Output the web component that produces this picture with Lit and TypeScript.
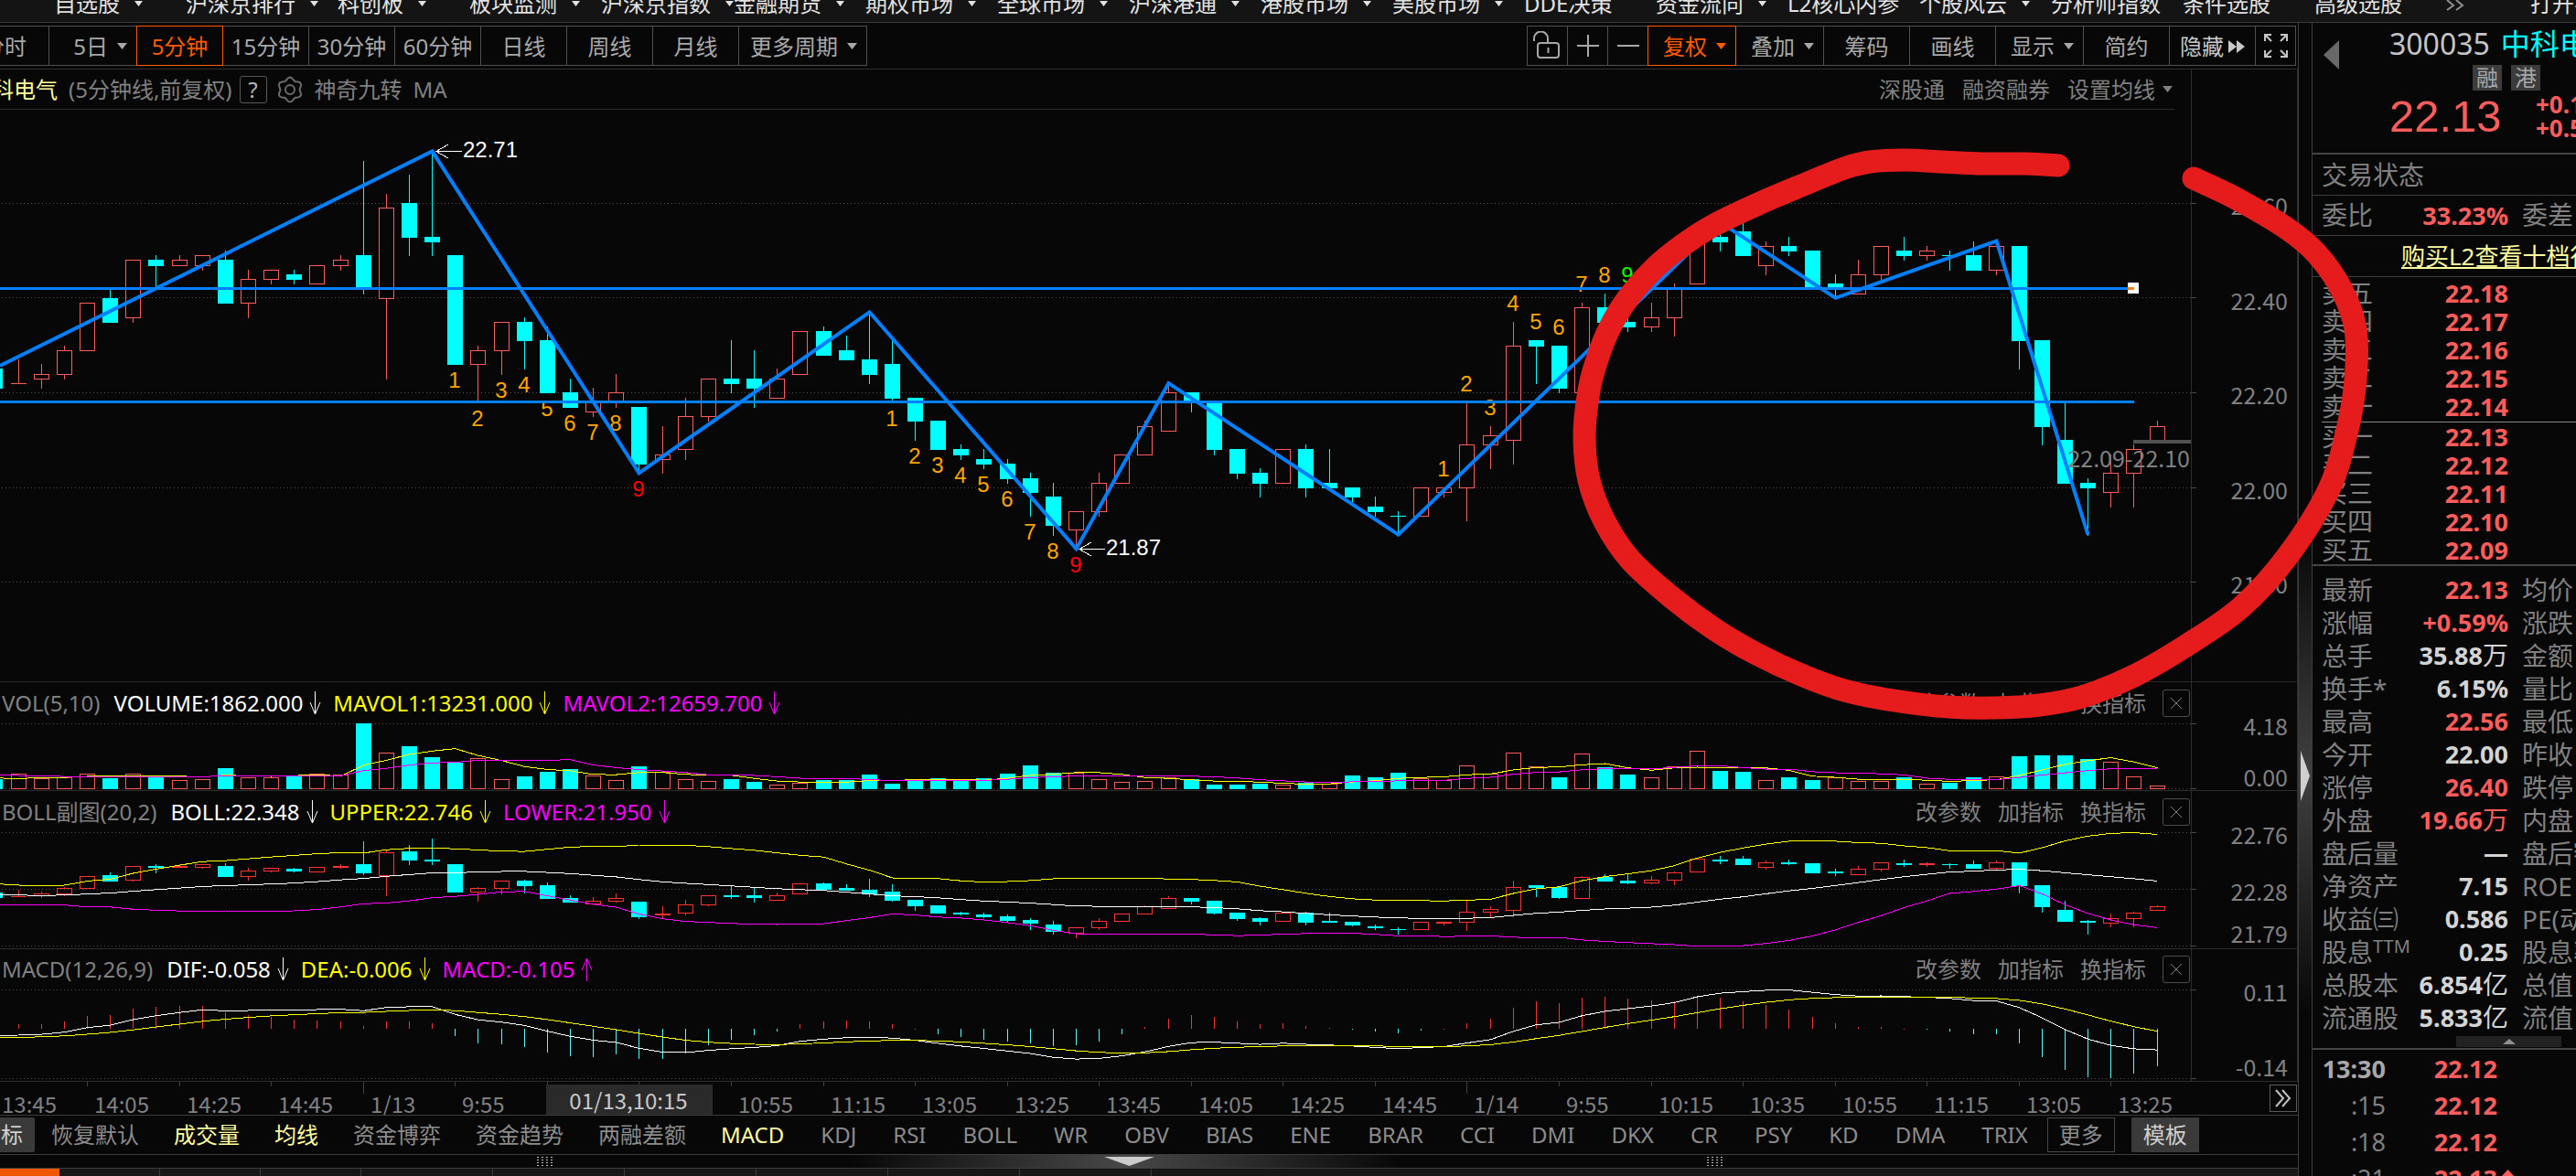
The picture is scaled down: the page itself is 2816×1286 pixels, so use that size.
import { LitElement, html, svg, css } from "lit";
import { customElement } from "lit/decorators.js";
import { classMap } from "lit/directives/class-map.js";

/* ---------- market data (prices in cents: open, close, high, low) ---------- */
type Candle = [number, number, number, number];

const CANDLES: Candle[] = [
  [2225, 2221, 2225, 2221],
  [2222, 2222, 2227, 2222], [2223, 2224, 2226, 2221], [2224, 2229, 2230, 2223], [2229, 2239, 2239, 2229],
  [2240, 2235, 2242, 2235], [2236, 2248, 2248, 2235], [2248, 2247, 2249, 2242], [2247, 2248, 2249, 2247],
  [2247, 2249, 2249, 2246], [2248, 2239, 2250, 2239], [2239, 2244, 2246, 2236], [2244, 2246, 2246, 2243],
  [2245, 2244, 2246, 2243], [2243, 2247, 2247, 2243], [2247, 2248, 2249, 2246], [2249, 2242, 2269, 2241],
  [2240, 2259, 2262, 2223], [2260, 2253, 2266, 2249], [2253, 2252, 2271, 2249], [2249, 2226, 2249, 2226],
  [2226, 2229, 2230, 2218], [2229, 2235, 2235, 2224], [2235, 2231, 2236, 2225], [2231, 2220, 2234, 2220],
  [2220, 2217, 2223, 2217], [2216, 2218, 2221, 2215], [2218, 2220, 2224, 2217], [2217, 2205, 2217, 2203],
  [2206, 2207, 2213, 2203], [2208, 2215, 2219, 2206], [2215, 2223, 2223, 2214], [2223, 2222, 2231, 2220],
  [2223, 2221, 2229, 2217], [2219, 2223, 2225, 2219], [2224, 2233, 2233, 2224], [2233, 2228, 2234, 2228],
  [2229, 2227, 2232, 2227], [2227, 2224, 2237, 2222], [2226, 2219, 2232, 2218], [2219, 2214, 2219, 2210],
  [2214, 2208, 2214, 2208], [2208, 2207, 2209, 2206], [2206, 2205, 2208, 2204], [2205, 2202, 2206, 2201],
  [2202, 2199, 2203, 2194], [2198, 2192, 2201, 2190], [2191, 2195, 2195, 2187], [2195, 2201, 2203, 2194],
  [2201, 2207, 2207, 2201], [2207, 2213, 2214, 2207], [2212, 2220, 2222, 2212], [2220, 2218, 2220, 2216],
  [2218, 2208, 2218, 2207], [2208, 2203, 2208, 2202], [2203, 2201, 2204, 2198], [2201, 2208, 2208, 2201],
  [2208, 2200, 2209, 2198], [2201, 2200, 2208, 2200], [2200, 2198, 2200, 2197], [2196, 2195, 2198, 2194],
  [2194, 2194, 2195, 2190], [2194, 2200, 2200, 2194], [2199, 2200, 2200, 2198], [2200, 2209, 2218, 2193],
  [2209, 2211, 2213, 2204], [2210, 2230, 2235, 2205], [2231, 2230, 2231, 2222], [2230, 2221, 2230, 2220],
  [2220, 2238, 2239, 2220], [2238, 2235, 2241, 2235], [2235, 2234, 2241, 2233], [2234, 2236, 2239, 2233],
  [2236, 2242, 2243, 2232], [2243, 2254, 2254, 2243], [2253, 2252, 2256, 2250], [2254, 2249, 2256, 2249],
  [2247, 2251, 2252, 2245], [2251, 2250, 2253, 2249], [2250, 2242, 2250, 2242], [2243, 2242, 2245, 2240],
  [2241, 2245, 2248, 2241], [2245, 2251, 2251, 2244], [2250, 2249, 2253, 2248], [2249, 2250, 2251, 2248],
  [2249, 2249, 2250, 2246], [2249, 2246, 2252, 2246], [2246, 2251, 2252, 2245], [2251, 2231, 2251, 2225],
  [2231, 2213, 2231, 2209], [2210, 2201, 2218, 2201], [2201, 2200, 2202, 2190], [2199, 2203, 2207, 2196],
  [2203, 2208, 2209, 2196], [2210, 2213, 2214, 2210],
];

const VOLUMES = [
  32, 47, 34, 36, 47, 34, 49, 42, 29, 32, 65, 35, 35, 40, 47, 44, 206, 113, 134, 99, 83, 98, 32, 39, 53, 62, 41,
  29, 71, 55, 32, 26, 30, 22, 12, 18, 27, 27, 45, 16, 28, 33, 26, 33, 48, 73, 50, 52, 32, 21, 24, 35, 30, 13, 13,
  16, 14, 19, 17, 42, 36, 50, 34, 27, 75, 49, 113, 72, 35, 110, 68, 45, 35, 72, 121, 56, 53, 27, 36, 27, 37, 24,
  24, 36, 15, 19, 36, 38, 102, 105, 105, 94, 84, 38, 9,
];

/* Bars before the visible window, used to warm up the averages. */
const PRIOR_CLOSES = [
  2231, 2229, 2224, 2220, 2219, 2217, 2219, 2221, 2223, 2225, 2229, 2232, 2229, 2222, 2217, 2218, 2223, 2224, 2222,
];
const PRIOR_VOLUMES = [51, 51, 51, 51, 51, 51, 28, 28, 30];

const RISE = "#ff5c5c";
const FALL = "#00ffff";
const WIDTH = 2395;

/* Index 0 in the arrays is the bar cut by the left edge. */
const barX = (i: number) => Math.round(19.6 + 25.14 * (i - 1));
const isDoji = (i: number) => CANDLES[i][0] === CANDLES[i][1];
const rising = (i: number) => (isDoji(i) ? i === 1 : CANDLES[i][1] > CANDLES[i][0]);
/* A volume bar is also hollow when the close is unchanged from the bar before. */
const volumeUp = (i: number) => rising(i) || (i > 0 && CANDLES[i][1] === CANDLES[i - 1][1]);

const priceY = (p: number) => 222.3 + (2260 - p) * 5.176;
const bollY = (p: number) => 972.2 + (2228 - p) * 1.281;
const volY = (v: number) => 862.6 - v * 0.3467;
const macdY = (v: number) => 1125.3 - v * 3.886;

const sum = (values: number[]) => values.reduce((a, b) => a + b, 0);
const mean = (values: number[]) => sum(values) / values.length;

function windowed(prior: number[], values: number[], n: number) {
  const all = [...prior, ...values];
  return values.map((_, i) => all.slice(Math.max(0, prior.length + i - n + 1), prior.length + i + 1));
}

const CLOSES = CANDLES.map((c) => c[1]);
const BOLL = windowed(PRIOR_CLOSES, CLOSES, 20).map((w) => {
  const m = mean(w);
  const d = Math.sqrt(sum(w.map((v) => (v - m) ** 2)) / (w.length - 1));
  return { mid: m, up: m + 2 * d, low: m - 2 * d };
});
const MAVOL1 = windowed(PRIOR_VOLUMES, VOLUMES, 5).map(mean);
const MAVOL2 = windowed(PRIOR_VOLUMES, VOLUMES, 10).map(mean);

const MACD = (() => {
  let e12 = 2222.7;
  let e26 = 2224.5;
  let dea = -2.7;
  return CLOSES.map((c, i) => {
    if (i > 0) {
      e12 += ((c - e12) * 2) / 13;
      e26 += ((c - e26) * 2) / 27;
    }
    const dif = e12 - e26;
    dea += (dif - dea) * 0.2;
    return { dif, dea, bar: 2 * (dif - dea) };
  });
})();

const pts = (values: number[], y: (v: number) => number) =>
  values.map((v, i) => `${barX(i) + 0.5},${y(v).toFixed(1)}`).join(" ");

function candles(y: (p: number) => number, rise: string) {
  return CANDLES.map(([o, c, h, l], i) => {
    const x = barX(i);
    const up = rising(i);
    const color = up ? rise : FALL;
    const top = Math.round(y(Math.max(o, c)));
    const bottom = Math.max(top, Math.round(y(Math.min(o, c))));
    const hi = Math.round(y(h));
    const lo = Math.round(y(l));
    return svg`
      ${hi < top ? svg`<rect x=${x} y=${hi} width="1" height=${top - hi} fill=${color}></rect>` : ""}
      ${lo > bottom ? svg`<rect x=${x} y=${bottom} width="1" height=${lo - bottom + 1} fill=${color}></rect>` : ""}
      ${
        isDoji(i)
          ? svg`<rect x=${x - 8} y=${top} width="17" height="1" fill=${color}></rect>`
          : up
            ? svg`<rect x=${x - 7.5} y=${top + 0.5} width="16" height=${Math.max(1, bottom - top)} fill="none" stroke=${color}></rect>`
            : svg`<rect x=${x - 8} y=${top} width="17" height=${bottom - top + 1} fill=${color}></rect>`
      }`;
  });
}

const dotted = (y: number) =>
  svg`<line x1="2" x2=${WIDTH} y1=${y + 0.5} y2=${y + 0.5} stroke="#505050" stroke-dasharray="1 3"></line>`;

/* Nine-count markers: first array slot, side, colour of the ninth. */
const COUNTS = [
  { from: 20, below: true, last: "#ff0000" },
  { from: 39, below: true, last: "#ff0000" },
  { from: 63, below: false, last: "#00ff00" },
];

const ZIGZAG: [number, number][] = [
  [19, 2271], [28, 2203], [38, 2237], [47, 2187], [51, 2222], [61, 2190], [75, 2256], [80, 2240], [87, 2252], [91, 2190],
];

const MARKER: [number, number][] = [
  [2398, 195], [2446, 218], [2500, 250], [2533, 278], [2560, 317], [2575, 360], [2575, 415], [2566, 470], [2546, 535],
  [2500, 609], [2450, 664], [2393, 704], [2333, 739], [2276, 762], [2230, 771], [2181, 774], [2130, 773], [2070, 766],
  [2016, 755], [1969, 738], [1920, 715], [1874, 688], [1827, 653], [1782, 612], [1754, 570], [1737, 525], [1732, 477],
  [1737, 427], [1746, 393], [1759, 360], [1779, 327], [1809, 293], [1841, 267], [1874, 246], [1922, 223], [1969, 203],
  [2016, 184], [2044, 177], [2082, 175], [2124, 177], [2167, 179], [2215, 179], [2250, 181],
];

function smooth(p: [number, number][]) {
  let d = `M${p[0][0]} ${p[0][1]}`;
  for (let i = 0; i < p.length - 1; i++) {
    const a = p[Math.max(0, i - 1)];
    const b = p[i];
    const c = p[i + 1];
    const e = p[Math.min(p.length - 1, i + 2)];
    d += ` C${b[0] + (c[0] - a[0]) / 6} ${b[1] + (c[1] - a[1]) / 6} ${c[0] - (e[0] - b[0]) / 6} ${c[1] - (e[1] - b[1]) / 6} ${c[0]} ${c[1]}`;
  }
  return d;
}

const GEAR = (() => {
  const out: string[] = [];
  for (let k = 0; k < 72; k++) {
    const t = (k / 72) * Math.PI * 2;
    const r = 12 + 1.4 * Math.cos(6 * t);
    out.push(`${(15 + r * Math.sin(t)).toFixed(2)},${(15 - r * Math.cos(t)).toFixed(2)}`);
  }
  return out.join(" ");
})();

const MENU: [string, boolean][] = [
  ["自选股", true], ["沪深京排行", true], ["科创板", true], ["板块监测", true], ["沪深京指数", true], ["金融期货", true],
  ["期权市场", true], ["全球市场", true], ["沪深港通", true], ["港股市场", true], ["美股市场", true], ["DDE决策", false],
  ["资金流向", true], ["L2核心内参", false], ["个股风云", true], ["分析师指数", false], ["条件选股", false], ["高级选股", false],
];

const TIMES = [
  "13:45", "14:05", "14:25", "14:45", "1/13", "9:55", "", "", "10:55", "11:15", "13:05", "13:25",
  "13:45", "14:05", "14:25", "14:45", "1/14", "9:55", "10:15", "10:35", "10:55", "11:15", "13:05", "13:25",
];

const PRESETS = ["恢复默认", "成交量", "均线", "资金博弈", "资金趋势", "两融差额"];
const INDICATORS = [
  "MACD", "KDJ", "RSI", "BOLL", "WR", "OBV", "BIAS", "ENE", "BRAR", "CCI", "DMI", "DKX", "CR", "PSY", "KD", "DMA", "TRIX",
];
const CHOSEN = new Set(["成交量", "均线", "MACD"]);

const SELLS = [["卖五", "22.18"], ["卖四", "22.17"], ["卖三", "22.16"], ["卖二", "22.15"], ["卖一", "22.14"]];
const BUYS = [["买一", "22.13"], ["买二", "22.12"], ["买三", "22.11"], ["买四", "22.10"], ["买五", "22.09"]];

interface Stat { label: string; sup?: string; value: string; unit?: string; up?: boolean; next: string }
const STATS: Stat[] = [
  { label: "最新", value: "22.13", up: true, next: "均价" },
  { label: "涨幅", value: "+0.59%", up: true, next: "涨跌" },
  { label: "总手", value: "35.88", unit: "万", next: "金额" },
  { label: "换手*", value: "6.15%", next: "量比" },
  { label: "最高", value: "22.56", up: true, next: "最低" },
  { label: "今开", value: "22.00", next: "昨收" },
  { label: "涨停", value: "26.40", up: true, next: "跌停" },
  { label: "外盘", value: "19.66", unit: "万", up: true, next: "内盘" },
  { label: "盘后量", value: "—", next: "盘后额" },
  { label: "净资产", value: "7.15", next: "ROE" },
  { label: "收益㈢", value: "0.586", next: "PE(动)" },
  { label: "股息", sup: "TTM", value: "0.25", next: "股息率" },
  { label: "总股本", value: "6.854", unit: "亿", next: "总值" },
  { label: "流通股", value: "5.833", unit: "亿", next: "流值" },
];

const TRADES = [["13:30", "22.12", ""], [":15", "22.12", ""], [":18", "22.12", ""], [":21", "22.13", "up"]];

type Reading = [string, string, boolean];

@customElement("app-root")
export class AppRoot extends LitElement {
  static styles = css`
    :host {
      display: block;
      --line: #2c2c2c;
      --edge: #3c3c3c;
      --dim: #808080;
      --rise: #ff5c5c;
      --accent: #ff5a00;
      --pale: #ffffa0;
      font-family: "Noto Sans", "Noto Sans CJK SC", sans-serif;
      font-size: 24px;
      line-height: 28px;
      color: var(--dim);
    }
    * { box-sizing: border-box; }
    button {
      font: inherit; color: inherit; background: none; border: 0; padding: 0; margin: 0;
      white-space: nowrap; cursor: pointer;
    }
    svg { display: block; }
    table { border-collapse: collapse; }
    td, th { padding: 0; font-weight: 400; text-align: left; white-space: nowrap; }
    .app {
      position: relative; overflow: hidden; background: #070707; min-height: 100vh;
      display: grid; grid-template-rows: 25px auto;
    }
    .menu {
      display: flex; align-items: flex-end; height: 25px; overflow: hidden; padding-left: 59px;
      background: #141414; border-bottom: 1px solid var(--edge); color: #e2e2e2;
    }
    .menu button {
      flex: 0 0 144px; display: flex; align-items: center; gap: 16px; padding-bottom: 6px;
    }
    .menu .wide { flex-basis: 166px; }
    .menu .narrow { flex-basis: 92px; padding-bottom: 12px; }
    .body { display: grid; grid-template-columns: minmax(0, 1fr) 16px 288px; height: 1261px; }
    .left { display: flex; flex-direction: column; min-width: 0; }
    .toolbar {
      display: flex; justify-content: space-between; height: 51px; padding: 3px 2px 0 0;
      border-bottom: 1px solid var(--line); color: #a8a8a8;
    }
    .group { display: flex; }
    .group button {
      width: 95px; height: 44px; margin-left: -1px; border: 1px solid #505050; overflow: hidden; padding-top: 1px;
      display: flex; align-items: center; justify-content: center; gap: 10px;
    }
    .group .cut { width: 54px; margin-left: 0; border-left: 0; justify-content: flex-end; padding-right: 24px; }
    .group .drop { width: 97px; justify-content: flex-end; padding-right: 10px; }
    .group .more { width: 141px; justify-content: flex-end; padding-right: 10px; }
    .group .icon { width: 45px; padding-top: 0; }
    .group .hide { gap: 5px; color: #c8c8c8; }
    .group .on { border-color: var(--accent); color: var(--accent); position: relative; z-index: 1; }
    .pane { display: grid; grid-template-columns: minmax(0, 1fr) 117px; border-top: 1px solid var(--line); }
    .pane.main { border-top: 0; }
    .plot { min-width: 0; }
    .plot svg { width: 100%; }
    .axis { border-left: 1px solid var(--line); border-right: 1px solid var(--line); }
    .axis svg { width: 116px; }
    .heading {
      display: flex; align-items: center; height: 44px; margin-right: 18px; padding-right: 2px;
      border-bottom: 1px solid var(--line);
    }
    .heading svg, .head svg { width: auto; }
    .stock {
      width: 63px; display: flex; justify-content: flex-end; overflow: hidden; white-space: nowrap;
      color: var(--pale); margin-right: 12px;
    }
    .help {
      width: 30px; height: 30px; border: 1px solid #585858; border-radius: 3px; margin: 0 10px 0 8px; color: #b4b4b4;
      line-height: 26px;
    }
    .gear { margin-right: 12px; }
    .ma { margin-left: 12px; }
    .links { margin-left: auto; display: flex; align-items: center; gap: 19px; }
    .links button { display: flex; align-items: center; gap: 8px; }
    .head { display: flex; align-items: center; height: 45px; padding-left: 2px; white-space: nowrap; }
    .head.low { height: 44px; }
    .name { margin-right: 15px; }
    .reading { display: flex; align-items: center; gap: 7px; margin-right: 13px; }
    .white { color: #ffffff; }
    .yellow { color: #ffff00; }
    .pink { color: #ff00ff; }
    .tools { margin-left: auto; display: flex; align-items: center; gap: 18px; padding-right: 1px; }
    .close {
      width: 30px; height: 30px; border: 1px solid #4c4c4c; border-radius: 3px;
      display: flex; align-items: center; justify-content: center;
    }
    .times { display: flex; height: 37px; border-top: 1px solid var(--line); }
    .times .plot { flex: 1; }
    .times .side { width: 117px; display: flex; justify-content: flex-end; align-items: center; padding-right: 1px; }
    .forward {
      width: 30px; height: 30px; border: 1px solid #5a5a5a; display: flex; align-items: center; justify-content: center;
    }
    .tabs {
      display: flex; align-items: center; height: 43px; border-top: 1px solid var(--edge);
      overflow: hidden; color: #8c8c8c;
    }
    .tabs .cut {
      width: 38px; height: 38px; margin-right: 18px; display: flex; justify-content: flex-end; align-items: center;
      padding-right: 13px; overflow: hidden; background: #3a3a3a; color: #d0d0d0; border-radius: 0 2px 2px 0;
    }
    .presets { display: flex; gap: 38px; padding-right: 38px; }
    .codes { display: flex; gap: 40px; padding-right: 21px; }
    .tabs .chosen { color: var(--pale); }
    .boxes { display: flex; gap: 18px; }
    .boxes button { width: 74px; height: 38px; border: 1px solid #484848; }
    .boxes .solid { background: #3a3a3a; border-color: #3a3a3a; color: #d0d0d0; }
    .drawer {
      height: 15px; border-top: 1px solid var(--edge); display: grid; align-items: center; justify-items: center;
      grid-template-columns: 1190px 89px 1190px;
      background: linear-gradient(90deg, transparent 37%, #484848 49%, transparent 61%);
    }
    .strip { display: flex; height: 9px; overflow: hidden; border-top: 1px solid var(--edge); background: #171717; }
    .strip span { width: 144px; border-right: 1px solid #3a3a3a; }
    .strip .hot { width: 65px; background: #f05500; border: 0; }
    .strip .short { width: 110px; }
    .splitter {
      border-left: 1px solid var(--edge); border-right: 1px solid var(--edge);
      display: grid; grid-template-rows: 66fr auto 34fr; justify-items: center;
      background: linear-gradient(transparent 44%, #404040 65%, transparent 86%);
    }
    .splitter button { grid-row: 2; }
    .quote { min-width: 0; overflow: hidden; font-size: 28px; line-height: 31px; white-space: nowrap; }
    .top { display: flex; height: 144px; border-bottom: 2px solid #444444; }
    .back { flex: 0 0 84px; height: 70px; padding-left: 12px; display: flex; align-items: center; }
    .title {
      display: flex; gap: 12px; height: 46px; margin: 0; padding-top: 2px;
      font-size: 32px; line-height: 42px; font-weight: 400; color: #c4c4c4;
    }
    .title b { font-weight: 400; color: #00ffff; }
    .badges { display: flex; gap: 10px; padding-left: 91px; }
    .badges span {
      width: 32px; height: 28px; background: #3c3c3c; color: #a8a8a8; font-size: 24px; line-height: 28px; text-align: center;
    }
    .deal { display: flex; align-items: center; height: 56px; color: var(--rise); }
    .price { flex: 0 0 160px; font-family: "Liberation Sans", Arial, sans-serif; font-size: 49px; line-height: 56px; }
    .moves { font-size: 26px; line-height: 26px; font-weight: 700; }
    .status { height: 45px; padding: 7px 10px; border-bottom: 1px solid var(--edge); }
    .ratio { height: 44px; padding-left: 10px; border-bottom: 1px solid var(--edge); display: flex; align-items: center; }
    .offer { height: 45px; padding: 7px 0 0 97px; border-bottom: 1px solid var(--edge); font-size: 26px; }
    .offer a { color: var(--pale); text-decoration: underline; text-underline-offset: 2px; }
    .book { margin-left: 10px; padding: 2px 0 1px; border-bottom: 1px solid #888888; }
    .book.buy { margin-left: 0; padding: 0 0 0 10px; border-bottom: 2px solid #444444; }
    .book th, .book td { height: 31px; }
    .label { width: 101px; min-width: 101px; }
    .value { width: 103px; min-width: 103px; text-align: right; font-size: 27px; font-weight: 700; color: #d4d4d4; }
    .value.up, .traded.up { color: var(--rise); }
    .unit { font-size: 28px; line-height: 0; font-weight: 400; }
    .next { padding-left: 15px; }
    .stats { height: 512px; padding: 8px 0 0 10px; }
    .stats th, .stats td { height: 36px; line-height: 34px; }
    .stats sup { font-size: 20px; line-height: 0; vertical-align: 10px; }
    .fold {
      display: flex; align-items: center; justify-content: center; width: 115px; height: 12px;
      margin: 2px 0 1px 157px; background: #222222;
    }
    .trades { border-top: 2px solid #444444; padding: 1px 0 0 10px; }
    .trades td, .trades th { height: 40px; line-height: 38px; font-size: 27px; }
    .clock { width: 70px; min-width: 70px; text-align: right; }
    .clock.full { font-weight: 700; color: #a8a8a8; }
    .traded { width: 122px; min-width: 122px; text-align: right; font-weight: 700; }
    .arrow { padding-left: 5px; }
    .marker { position: absolute; top: 0; right: 0; width: 2816px; height: 1286px; pointer-events: none; }
    .digits { font-family: "Liberation Sans", Arial, sans-serif; font-size: 24px; }
    .scale { font-family: "Noto Sans CJK SC", "Noto Sans", sans-serif; font-size: 25px; fill: #808080; }
    .hours { font-family: "Noto Sans CJK SC", "Noto Sans", sans-serif; font-size: 24px; fill: #808080; }
    .hours.picked { fill: #c8c8c8; }
  `;

  private tri(w = 11, h = 7) {
    return html`<svg width=${w} height=${h} viewBox="0 0 10 7" preserveAspectRatio="none"><path d="M0 0H10L5 7Z" fill="currentColor"></path></svg>`;
  }

  private chart(y: number, h: number, content: unknown, label: string) {
    return html`<svg height=${h} viewBox="0 ${y} ${WIDTH} ${h}" preserveAspectRatio="xMaxYMin slice"
      shape-rendering="crispEdges" role="img" aria-label=${label}>${content}</svg>`;
  }

  private scale(y: number, h: number, labels: [string, number][], ticks: number[]) {
    return html`<div class="axis"><svg height=${h} viewBox="0 ${y} 116 ${h}">
      ${ticks.map((t) => svg`<rect x="0" y=${t} width="5" height="1" fill="#484848"></rect>`)}
      ${labels.map(([s, c]) => svg`<text class="scale" x="105" y=${c + 9} text-anchor="end">${s}</text>`)}
    </svg></div>`;
  }

  private mainChart() {
    const zig = [`0,400`, ...ZIGZAG.map(([i, p]) => `${barX(i) + 0.5},${priceY(p).toFixed(1)}`)].join(" ");
    return this.chart(120, 625, svg`
      ${[222, 325, 429, 533, 636].map(dotted)}
      ${candles(priceY, RISE)}
      ${COUNTS.map((g) => Array.from({ length: 9 }, (_, k) => {
        const c = CANDLES[g.from + k];
        const mid = g.below ? priceY(c[3]) + 18 : priceY(c[2]) - 20;
        return svg`<text class="digits" text-anchor="middle" x=${barX(g.from + k)} y=${Math.round(mid + 8)}
          fill=${k === 8 ? g.last : "#ffa500"}>${k + 1}</text>`;
      }))}
      <rect x="0" y="314" width="2333" height="3" fill="#0080ff"></rect>
      <rect x="0" y="438" width="2333" height="3" fill="#0080ff"></rect>
      <polyline points=${zig} fill="none" stroke="#0080ff" stroke-width="4" shape-rendering="auto"></polyline>
      <rect x="2326" y="309" width="12" height="12" fill="#ffffff"></rect>
      <rect x="2326" y="314" width="7" height="3" fill="#ff8000"></rect>
      <rect x="2332" y="481" width="63" height="4" fill="#505050"></rect>
      <text class="scale" x="2394" y="511" text-anchor="end">22.09-22.10</text>
      ${[[477, 165, "22.71"], [1180, 600, "21.87"]].map(([x, y, s]) => svg`
        <path d=${`M${x} ${Number(y) + 0.5}H${Number(x) + 28}M${Number(x) + 13} ${Number(y) - 7}L${x} ${Number(y) + 0.5}L${Number(x) + 13} ${Number(y) + 8}`}
          fill="none" stroke="#ffffff"></path>
        <text class="digits" x=${Number(x) + 29} y=${Number(y) + 7} fill="#ffffff">${s}</text>`)}
    `, "5分钟K线");
  }

  private volumeChart() {
    return this.chart(791, 73, svg`
      ${dotted(791)}${dotted(862)}
      ${VOLUMES.map((v, i) => {
        const top = Math.round(volY(v));
        return volumeUp(i)
          ? svg`<rect x=${barX(i) - 7.5} y=${top + 0.5} width="16" height=${Math.max(1, 862 - top)} fill="#070707" stroke=${RISE}></rect>`
          : svg`<rect x=${barX(i) - 8} y=${top} width="17" height=${863 - top} fill=${FALL}></rect>`;
      })}
      <polyline points=${pts(MAVOL1, volY)} fill="none" stroke="#ffff00"></polyline>
      <polyline points=${pts(MAVOL2, volY)} fill="none" stroke="#ff00ff"></polyline>
    `, "成交量");
  }

  private bollChart() {
    return this.chart(910, 127, svg`
      ${dotted(910)}${dotted(972)}${dotted(1034)}
      ${candles(bollY, "#ff3232")}
      <polyline points=${pts(BOLL.map((b) => b.up), bollY)} fill="none" stroke="#ffff00"></polyline>
      <polyline points=${pts(BOLL.map((b) => b.mid), bollY)} fill="none" stroke="#ffffff"></polyline>
      <polyline points=${pts(BOLL.map((b) => b.low), bollY)} fill="none" stroke="#ff00ff"></polyline>
    `, "BOLL");
  }

  private macdChart() {
    return this.chart(1082, 100, svg`
      ${dotted(1082)}${dotted(1179)}
      ${MACD.map(({ bar }, i) => {
        const y = Math.round(macdY(bar));
        return svg`<rect x=${barX(i)} y=${Math.min(y, 1125)} width="1" height=${Math.max(1, Math.abs(y - 1125))}
          fill=${bar > 0 ? "#ff3232" : "#54ffff"}></rect>`;
      })}
      <polyline points=${pts(MACD.map((m) => m.dif), macdY)} fill="none" stroke="#ffffff"></polyline>
      <polyline points=${pts(MACD.map((m) => m.dea), macdY)} fill="none" stroke="#ffff00"></polyline>
    `, "MACD");
  }

  private timeAxis() {
    return this.chart(1183, 36, svg`
      ${TIMES.map((t, k) => {
        const x = barX(4 * k);
        const tall = t.startsWith("1/");
        return svg`<rect x=${x} y="1183" width="1" height=${tall ? 13 : 5} fill="#404040"></rect>
          <text class="hours" x=${x + 8} y="1217">${t}</text>`;
      })}
      <rect x="597" y="1186" width="182" height="33" fill="#2a2a2a"></rect>
      <text class="hours picked" x="687" y="1213" text-anchor="middle">01/13,10:15</text>
    `, "时间轴");
  }

  private readings(name: string, list: Reading[], low = false) {
    return html`<div class=${classMap({ head: true, low })}>
      <span class="name">${name}</span>
      ${list.map(([cls, text, up]) => html`<span class="reading ${cls}">${text}
        <svg width="13" height="26" viewBox="0 0 13 26"><path fill="none" stroke="currentColor"
          d=${up ? "M6.5 26V1M1 14L6.5 1L12 14" : "M6.5 0V25M1 12L6.5 25L12 12"}></path></svg></span>`)}
      <div class="tools">
        <button>改参数</button><button>加指标</button><button>换指标</button>
        <button class="close" aria-label="关闭"><svg width="14" height="14" viewBox="0 0 14 14"><path d="M1 1L13 13M13 1L1 13" stroke="#808080"></path></svg></button>
      </div>
    </div>`;
  }

  private toolbar() {
    const periods = ["5分钟", "15分钟", "30分钟", "60分钟", "日线", "周线", "月线"];
    return html`<div class="toolbar">
      <div class="group">
        <button class="cut">分时</button>
        <button class="drop">5日${this.tri()}</button>
        ${periods.map((p, i) => html`<button class=${classMap({ on: i === 0 })}>${p}</button>`)}
        <button class="more">更多周期${this.tri()}</button>
      </div>
      <div class="group">
        <button class="icon" aria-label="锁定"><svg width="32" height="32" viewBox="0 0 32 32" fill="none" stroke="currentColor" stroke-width="2">
          <rect x="5" y="13" width="23" height="16" rx="3"></rect><path d="M1 11V8A7.500 7.500 0 0 1 16 8V13M16.500 18V24"></path></svg></button>
        <button class="icon" aria-label="放大"><svg width="24" height="24"><path d="M0 12H24M12 0V24" stroke="currentColor" stroke-width="2"></path></svg></button>
        <button class="icon" aria-label="缩小"><svg width="24" height="24"><path d="M0 12H24" stroke="currentColor" stroke-width="2"></path></svg></button>
        <button class="drop on">复权${this.tri()}</button>
        <button class="drop">叠加${this.tri()}</button>
        <button>筹码</button>
        <button>画线</button>
        <button class="drop">显示${this.tri()}</button>
        <button>简约</button>
        <button class="hide">隐藏<svg width="18" height="14" viewBox="0 0 18 14"><path d="M0 0L9 7L0 14ZM9 0L18 7L9 14Z" fill="currentColor"></path></svg></button>
        <button class="icon" aria-label="全屏"><svg width="28" height="28" viewBox="0 0 28 28" fill="none" stroke="#c4c4c4" stroke-width="2">
          <path d="M2 9V2H9M2 2L9 9M19 2H26V9M26 2L19 9M2 19V26H9M2 26L9 19M19 26H26V19M26 26L19 19"></path></svg></button>
      </div>
    </div>`;
  }

  private book(rows: string[][], cls: string) {
    return html`<div class="book ${cls}"><table>
      ${rows.map(([l, v]) => html`<tr><th class="label" scope="row">${l}</th><td class="value up">${v}</td></tr>`)}
    </table></div>`;
  }

  private tab(t: string) {
    return html`<button class=${classMap({ chosen: CHOSEN.has(t) })}>${t}</button>`;
  }

  private grip() {
    return html`<svg width="17" height="10" viewBox="0 0 17 10" shape-rendering="crispEdges">${[0, 5, 10, 15].map((x) =>
      [0, 3, 6, 9].map((y) => svg`<rect x=${x} y=${y} width="2" height="1" fill="#c0c0c0"></rect>`))}</svg>`;
  }

  private quote() {
    return html`<section class="quote">
      <div class="top">
        <button class="back" aria-label="上一只"><svg width="17" height="32"><path d="M17 0V32L0 16Z" fill="#686868"></path></svg></button>
        <div>
          <h1 class="title"><span>300035</span><b>中科电气</b></h1>
          <div class="badges"><span>融</span><span>港</span></div>
          <div class="deal"><span class="price">22.13</span><div class="moves"><div>+0.13</div><div>+0.59%</div></div></div>
        </div>
      </div>
      <div class="status">交易状态</div>
      <div class="ratio"><table><tr><th class="label" scope="row">委比</th><td class="value up">33.23%</td><td class="next">委差</td></tr></table></div>
      <div class="offer"><a href="#level2">购买L2查看十档行情</a></div>
      ${this.book(SELLS, "")}
      ${this.book(BUYS, "buy")}
      <div class="stats"><table>
        ${STATS.map((s) => html`<tr>
          <th class="label" scope="row">${s.label}${s.sup ? html`<sup>${s.sup}</sup>` : ""}</th>
          <td class=${classMap({ value: true, up: !!s.up })}>${s.value}${s.unit ? html`<span class="unit">${s.unit}</span>` : ""}</td>
          <td class="next">${s.next}</td></tr>`)}
      </table></div>
      <button class="fold" aria-label="收起"><svg width="14" height="6"><path d="M0 6L7 0L14 6Z" fill="#909090"></path></svg></button>
      <div class="trades"><table>
        ${TRADES.map(([t, p, a], i) => html`<tr>
          <th scope="row" class=${classMap({ clock: true, full: i === 0 })}>${t}</th>
          <td class="traded up">${p}</td>
          <td class="arrow">${a ? html`<svg width="13" height="22"><path d="M6.500 1L13 8H9V22H4V8H0Z" fill="#ff5c5c"></path></svg>` : ""}</td></tr>`)}
      </table></div>
    </section>`;
  }

  render() {
    return html`<div class="app">
      <nav class="menu">
        ${MENU.map(([t, d], i) => html`<button class=${classMap({ wide: i === 1 })}>${t}${d ? this.tri(9, 6) : ""}</button>`)}
        <button class="narrow" aria-label="更多"><svg width="20" height="13" viewBox="0 0 20 13"><path d="M1 1L8 7L1 12M11 1L18 7L11 12" fill="none" stroke="#909090" stroke-width="2"></path></svg></button>
        <button>打开导航</button>
      </nav>
      <div class="body">
        <main class="left">
          ${this.toolbar()}
          <div class="pane main">
            <div class="plot">
              <div class="heading">
                <span class="stock">中科电气</span><span>(5分钟线,前复权)</span>
                <button class="help">?</button>
                <button class="gear" aria-label="设置"><svg width="30" height="30" viewBox="0 0 30 30" fill="none" stroke="#6c6c6c" stroke-width="2">
                  <polygon points=${GEAR}></polygon><circle cx="15" cy="15" r="5"></circle></svg></button>
                <span>神奇九转</span><span class="ma">MA</span>
                <div class="links"><button>深股通</button><button>融资融券</button><button>设置均线${this.tri()}</button></div>
              </div>
              ${this.mainChart()}
            </div>
            ${this.scale(76, 669, [["22.60", 226], ["22.40", 330], ["22.20", 433], ["22.00", 537], ["21.80", 640]], [222, 325, 429, 533, 636])}
          </div>
          <div class="pane">
            <div class="plot">
              ${this.readings("VOL(5,10)", [["white", "VOLUME:1862.000", false], ["yellow", "MAVOL1:13231.000", false], ["pink", "MAVOL2:12659.700", false]])}
              ${this.volumeChart()}
            </div>
            ${this.scale(746, 118, [["4.18", 795], ["0.00", 851]], [791, 862])}
          </div>
          <div class="pane">
            <div class="plot">
              ${this.readings("BOLL副图(20,2)", [["white", "BOLL:22.348", false], ["yellow", "UPPER:22.746", false], ["pink", "LOWER:21.950", false]])}
              ${this.bollChart()}
            </div>
            ${this.scale(865, 172, [["22.76", 914], ["22.28", 976], ["21.79", 1022]], [910, 972, 1034])}
          </div>
          <div class="pane">
            <div class="plot">
              ${this.readings("MACD(12,26,9)", [["white", "DIF:-0.058", false], ["yellow", "DEA:-0.006", false], ["pink", "MACD:-0.105", true]], true)}
              ${this.macdChart()}
            </div>
            ${this.scale(1038, 144, [["0.11", 1086], ["-0.14", 1168]], [1082, 1179])}
          </div>
          <div class="times">
            <div class="plot">${this.timeAxis()}</div>
            <div class="side"><button class="forward" aria-label="后移"><svg width="18" height="20" viewBox="0 0 18 20"><path d="M1 1L9 10L1 19M8 1L16 10L8 19" fill="none" stroke="#c0c0c0" stroke-width="2"></path></svg></button></div>
          </div>
          <div class="tabs">
            <button class="cut">指标</button>
            <div class="presets">${PRESETS.map((t) => this.tab(t))}</div>
            <div class="codes">${INDICATORS.map((t) => this.tab(t))}</div>
            <div class="boxes"><button>更多</button><button class="solid">模板</button></div>
          </div>
          <div class="drawer">
            ${this.grip()}
            <svg width="55" height="10"><path d="M0 0H55L27.500 10Z" fill="#cccccc"></path></svg>
            ${this.grip()}
          </div>
          <div class="strip"><span class="hot"></span><span class="short"></span><span class="short"></span><span class="short"></span>
            ${Array.from({ length: 6 }, () => html`<span></span>`)}</div>
        </main>
        <div class="splitter"><button aria-label="收起侧栏"><svg width="10" height="55"><path d="M0 0L10 27.500L0 55Z" fill="#d0d0d0"></path></svg></button></div>
        ${this.quote()}
      </div>
      <svg class="marker" viewBox="0 0 2816 1286" aria-hidden="true">
        <path d=${smooth(MARKER)} fill="none" stroke="#e61c1c" stroke-width="25" stroke-linecap="round" stroke-linejoin="round"></path>
      </svg>
    </div>`;
  }
}
